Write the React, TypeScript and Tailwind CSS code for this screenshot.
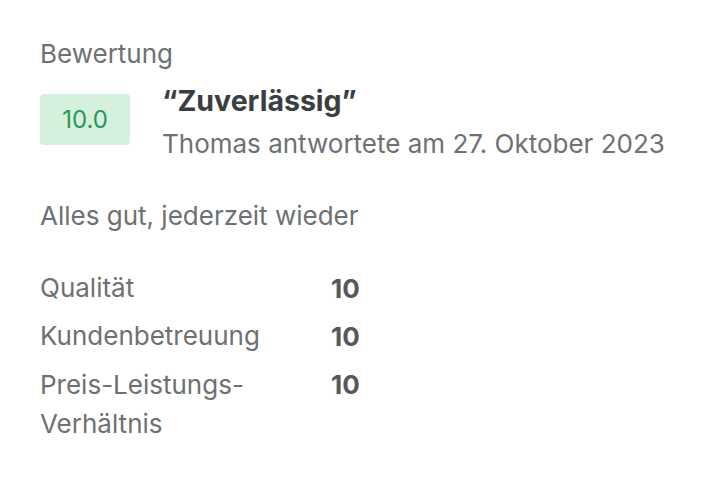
export default function App() {
  const rows = [
    { label: ['Qualität'], value: '10' },
    { label: ['Kundenbetreuung'], value: '10' },
    { label: ['Preis-Leistungs-', 'Verhältnis'], value: '10' },
  ];

  return (
    <div
      className="w-[720px] h-[492px] bg-white px-[40px] pt-[38px] text-[#6d7173]"
      style={{ fontFamily: 'Inter, "Noto Sans", sans-serif' }}
    >
      <div className="text-[26px] leading-[32px]">Bewertung</div>

      <div className="flex mt-[13px]">
        <div className="mt-[11px] w-[90px] h-[51px] shrink-0 rounded-[4px] bg-[#d5f1de] flex items-center justify-center text-[24px] text-[#2b9657]">
          10.0
        </div>
        <div className="ml-[32px]">
          <div className="text-[28.5px] leading-[36px] font-bold text-[#3a3e41]">“Zuverlässig”</div>
          <div className="mt-[9px] text-[26px] leading-[32px] whitespace-nowrap">
            Thomas antwortete am 27. Oktober 2023
          </div>
        </div>
      </div>

      <div className="mt-[40px] text-[26px] leading-[32px]">Alles gut, jederzeit wieder</div>

      <div className="mt-[37px] flex flex-col gap-[8px]">
        {rows.map((r) => (
          <div key={r.value + r.label[0]} className="flex text-[26px] leading-[40px]">
            <div className="w-[291px] leading-[39px]">
              {r.label.map((l) => (
                <div key={l} className="leading-[40px] last:leading-[38px]">{l}</div>
              ))}
            </div>
            <div className="font-bold text-[#54595c]">{r.value}</div>
          </div>
        ))}
      </div>
    </div>
  );
}
